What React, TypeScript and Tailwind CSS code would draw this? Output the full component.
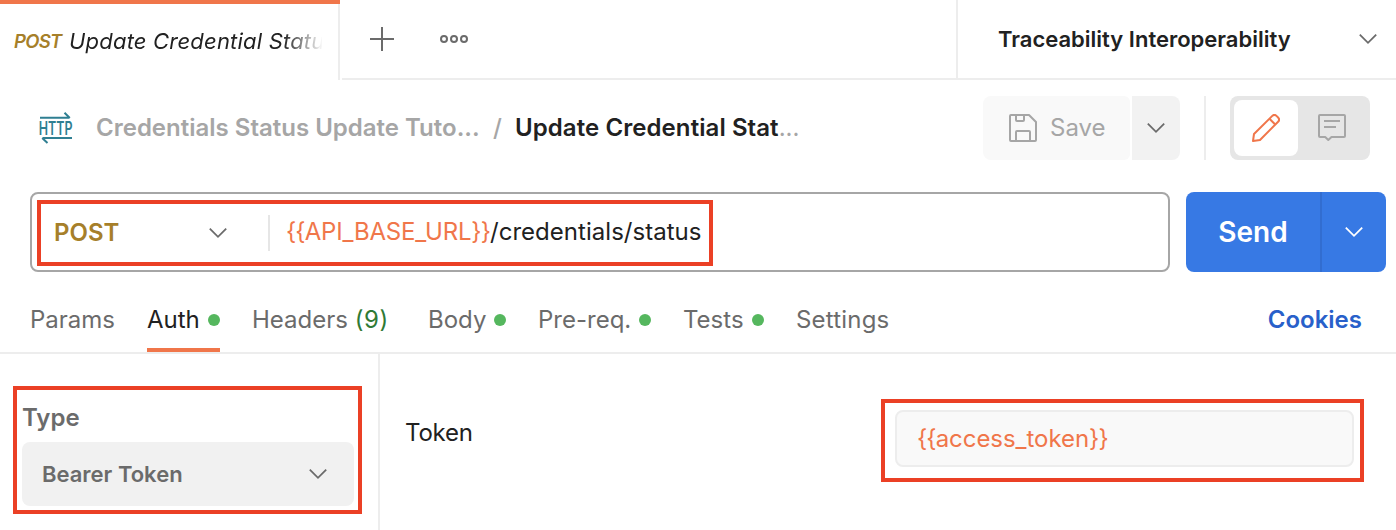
import type { ReactNode } from "react";

function Chevron({ className = "" }: { className?: string }) {
  return (
    <svg width="20" height="12" viewBox="0 0 20 12" fill="none" className={`shrink-0 ${className}`}>
      <path d="M1.8 1.7 L10 9.8 L18.2 1.7" stroke="currentColor" strokeWidth="1.8" />
    </svg>
  );
}

function HttpIcon() {
  return (
    <svg width="34" height="32" viewBox="0 0 34 32" fill="none" stroke="#2f7f92" strokeWidth="2" className="shrink-0 overflow-visible">
      <path d="M1 5.7H30.5M25.5 0.8L30.8 6" />
      <path d="M33 26H3.5M8.5 31L3.2 26" />
      <text
        x="-0.3"
        y="22.8"
        textLength="33.8"
        lengthAdjust="spacingAndGlyphs"
        fontFamily="Inter"
        fontSize="18"
        fontWeight="560"
        fill="#2f7f92"
        stroke="none"
      >
        HTTP
      </text>
    </svg>
  );
}

function SaveIcon() {
  return (
    <svg width="28" height="28" viewBox="0 0 28 28" fill="none" stroke="#a6a6a6" strokeWidth="2" strokeLinejoin="round">
      <path d="M2 1H20L27 8V26a1 1 0 0 1-1 1H2a1 1 0 0 1-1-1V2a1 1 0 0 1 1-1Z" />
      <path d="M7 1V6a1 1 0 0 0 1 1H14a1 1 0 0 0 1-1V1" />
      <path d="M7 27V18a1 1 0 0 1 1-1H20a1 1 0 0 1 1 1V27" />
    </svg>
  );
}

function PencilIcon() {
  return (
    <svg width="28" height="28" viewBox="0 0 28 28" fill="none" stroke="#f0764a" strokeWidth="2" strokeLinejoin="round">
      <path d="M1 27L2 20L20.3 1.9a3 3 0 0 1 4.2 0L26.1 3.5a3 3 0 0 1 0 4.2L8 26L1 27Z" />
      <path d="M17.5 4.8L23.2 10.5" />
    </svg>
  );
}

function CommentIcon() {
  return (
    <svg width="28" height="28" viewBox="0 0 28 28" fill="none" stroke="#a6a6a6" strokeWidth="2" strokeLinejoin="round">
      <path d="M2 1H26a1 1 0 0 1 1 1V22a1 1 0 0 1-1 1H13.5L10.3 26L7.2 23H2a1 1 0 0 1-1-1V2a1 1 0 0 1 1-1Z" />
      <path d="M6 7H22M6 13H18" />
    </svg>
  );
}

function Tab({ className, active, dot, children }: { className: string; active?: boolean; dot?: boolean; children: ReactNode }) {
  return (
    <div
      className={`flex h-20 shrink-0 items-center justify-between border-b-4 pt-5 whitespace-nowrap ${
        active ? "border-[#f0764a] text-[#212121]" : "border-transparent text-[#6b6b6b]"
      } ${className}`}
    >
      <span>{children}</span>
      {dot && <span className="size-3 rounded-full bg-[#55b75e]" />}
    </div>
  );
}

export default function App() {
  return (
    <div className="flex h-[530px] w-[1396px] flex-col overflow-hidden bg-white font-['Inter',sans-serif] text-[24px] leading-8 text-[#212121]">
      <header className="flex h-20 shrink-0">
        <div className="mr-0.5 flex w-[340px] shrink-0 flex-col border-t-4 border-[#f0764a]">
          <div className="flex h-full items-center overflow-hidden border-r-2 border-[#ededed] pr-4 pb-0.5 pl-3.5 italic whitespace-nowrap">
            <span className="w-[55px] shrink-0 text-[18.5px] font-semibold tracking-[-0.7px] text-[#a67f2a]">POST</span>
            <span className="w-[253px] overflow-hidden [mask-image:linear-gradient(to_right,black_214px,transparent_254px)] text-[22px] tracking-[0.2px]">
              Update Credential Status
            </span>
          </div>
        </div>
        <div className="flex flex-1 border-b-2 border-[#ededed]">
          <div className="flex flex-1 items-center gap-[46px] pl-7 text-[#6b6b6b]">
            <svg width="24" height="24" viewBox="0 0 24 24" stroke="currentColor" strokeWidth="2">
              <path d="M12 0V24M0 12H24" />
            </svg>
            <svg width="28" height="8" viewBox="0 0 28 8" fill="none" stroke="currentColor" strokeWidth="2">
              <circle cx="4" cy="4" r="3" />
              <circle cx="14" cy="4" r="3" />
              <circle cx="24" cy="4" r="3" />
            </svg>
          </div>
          <div className="flex w-[440px] items-center justify-between border-l-2 border-[#ededed] pr-[18px] pl-10">
            <span className="text-[22px] font-semibold whitespace-nowrap">Traceability Interoperability</span>
            <Chevron className="text-[#6b6b6b]" />
          </div>
        </div>
      </header>

      <section className="flex h-28 shrink-0 items-center pr-[26px] pb-4 pl-[39px]">
        <HttpIcon />
        <div className="ml-[23px] flex flex-1 font-semibold whitespace-nowrap text-[#a6a6a6]">
          <span className="w-[397px]">Credentials Status Update Tuto...</span>
          <span className="w-[22px] font-medium">/</span>
          <span>
            <span className="tracking-[0.08px] text-[#212121]">Update Credential Stat</span>
            <span className="font-normal">...</span>
          </span>
        </div>
        <button className="flex h-16 w-[147px] items-center gap-[13px] rounded-l-lg rounded-r-md bg-[#f9f9f9] pl-[26px] text-[#a6a6a6]">
          <SaveIcon />
          <span>Save</span>
        </button>
        <button className="ml-0.5 flex h-16 w-12 items-center justify-center rounded-r-lg bg-[#f2f2f2] text-[#6b6b6b]">
          <Chevron />
        </button>
        <div className="mx-6 h-16 w-0.5 bg-[#ededed]" />
        <div className="flex h-16 w-[140px] rounded-lg bg-[#e6e6e6] p-1">
          <button className="flex w-16 items-center justify-center rounded-lg bg-white">
            <PencilIcon />
          </button>
          <button className="flex w-[68px] items-center justify-center">
            <CommentIcon />
          </button>
        </div>
      </section>

      <section className="flex h-20 shrink-0 gap-4 pr-2.5 pl-[30px]">
        <div className="flex w-[1140px] items-start rounded-lg border-2 border-[#a6a6a6] pt-1.5 pl-[5px]">
          <div className="flex h-[66px] w-[676px] items-center border-4 border-[#eb4025] pl-[13px] whitespace-nowrap">
            <div className="flex h-9 w-[216px] items-center justify-between border-r-2 border-[#e6e6e6] pr-10">
              <span className="font-semibold text-[#a67f2a]">POST</span>
              <Chevron className="text-[#6b6b6b]" />
            </div>
            <span className="ml-4 pb-0.5">
              <span className="text-[#f0764a]">
                <span className="tracking-[-0.9px]">{"{{"}</span>
                <span className="tracking-[-0.2px]">API_BASE_URL</span>
                <span className="tracking-[-0.9px]">{"}}"}</span>
              </span>
              <span className="tracking-[0.03px]">/credentials/status</span>
            </span>
          </div>
        </div>
        <div className="flex w-[200px] overflow-hidden rounded-lg bg-[#3779e4] text-white">
          <button className="flex w-[134px] items-center justify-center text-[28px] font-semibold">Send</button>
          <button className="flex w-[66px] items-center justify-center border-l-2 border-[#326dd0]">
            <Chevron />
          </button>
        </div>
      </section>

      <nav className="flex h-[82px] shrink-0 border-b-2 border-[#ededed] pr-[34px] pl-[30px]">
        <Tab className="mr-[33px] w-[84px]">Params</Tab>
        <Tab className="mr-8 w-[73px]" active dot>Auth</Tab>
        <Tab className="mr-10 w-[136px]">
          Headers <span className="tracking-[0.6px] text-[#2f7a35]">(9)</span>
        </Tab>
        <Tab className="mr-8 w-[78px]" dot>Body</Tab>
        <Tab className="mr-8 w-[113px]" dot>Pre-req.</Tab>
        <Tab className="mr-8 w-[81px]" dot>Tests</Tab>
        <Tab className="w-[94px] tracking-[0.2px]">Settings</Tab>
        <a className="ml-auto pt-8 font-semibold text-[#2860ca]">Cookies</a>
      </nav>

      <main className="flex flex-1">
        <aside className="w-[380px] shrink-0 border-r-2 border-[#ededed] pt-8 pl-[13px]">
          <div className="h-32 w-[349px] border-4 border-[#eb4025] pt-3 pl-[5px] font-semibold text-[#6b6b6b]">
            <div>Type</div>
            <div className="mt-2 flex h-16 w-[332px] items-center justify-between rounded-lg bg-[#f1f1f1] pr-[26px] pl-5 text-[22px]">
              <span>Bearer Token</span>
              <Chevron />
            </div>
          </div>
        </aside>
        <div className="flex flex-1 items-start justify-between pr-8 pl-[25px]">
          <label className="pt-[63px] tracking-[-0.2px]">Token</label>
          <div className="mt-[45px] h-[83px] w-[483px] border-4 border-[#eb4025] pt-[7px] pl-2.5">
            <div className="flex h-[57px] w-[459px] items-center rounded-lg border-2 border-[#ededed] bg-[#f9f9f9] pl-5 text-[#f0764a]">
              <span className="tracking-[-0.9px]">{"{{"}</span>
              <span className="tracking-[-0.05px]">access_token</span>
              <span className="tracking-[-0.9px]">{"}}"}</span>
            </div>
          </div>
        </div>
      </main>
    </div>
  );
}
